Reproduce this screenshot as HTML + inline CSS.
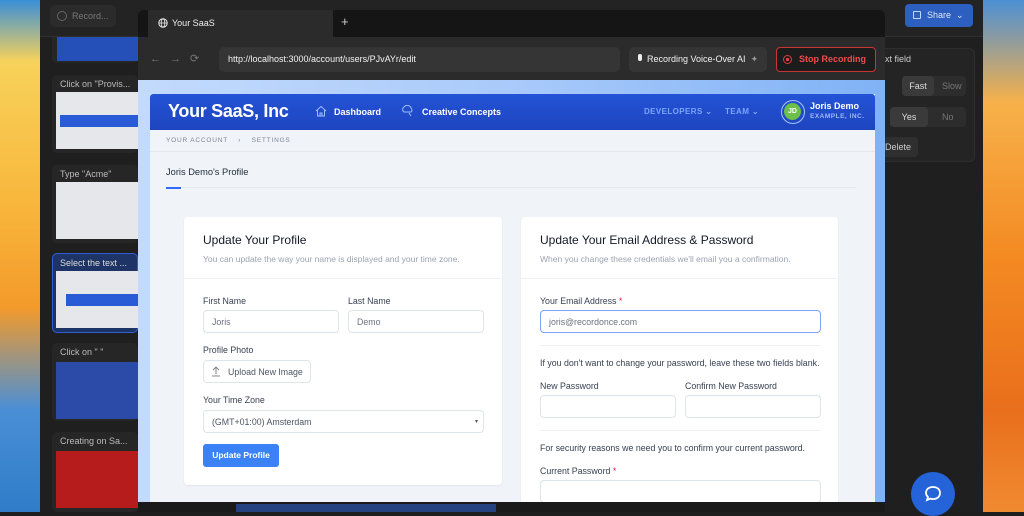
<!DOCTYPE html>
<html><head><style>
*{box-sizing:border-box;margin:0;padding:0}
body{width:1024px;height:512px;overflow:hidden;position:relative;font-family:"Liberation Sans",sans-serif;background:#1e1e1e}
.abs{position:absolute;white-space:nowrap}
.lbl{font-size:8.8px;color:#374151}
.inp{position:absolute;white-space:nowrap;background:#fff;border:1px solid #dfe3ea;border-radius:4px;font-size:8.8px;color:#6b7280;padding:0 8px;display:flex;align-items:center}
</style></head><body>
<div class="abs" style="left:0;top:0;width:40px;height:512px;background:linear-gradient(180deg,#3a8fd8 0%,#f7d25a 12%,#f8b63c 40%,#f39a2a 60%,#4a8fd6 80%,#2f7cc8 100%)"></div>
<div class="abs" style="left:983px;top:0;width:41px;height:512px;background:linear-gradient(180deg,#4b8fd4 0%,#f7b14a 20%,#f48a22 50%,#e96f1c 80%,#f08a30 100%)"></div>
<div class="abs" style="left:40px;top:0;width:943px;height:512px;background:#1f1f1f"></div>
<div class="abs" style="left:40px;top:0;width:943px;height:37px;background:#232323;border-bottom:1px solid #303030"></div>
<div class="abs" style="left:50px;top:5px;width:66px;height:22px;background:#2b2b2b;border-radius:5px;color:#777;font-size:9px;padding:6px 0 0 22px">Record...</div>
<div class="abs" style="left:57px;top:11px;width:10px;height:10px;border:1.5px solid #666;border-radius:50%"></div>
<div class="abs" style="left:905px;top:4px;width:68px;height:23px;background:#2d5fc0;border-radius:4px;color:#dbe6ff;font-size:9px;padding:6px 0 0 22px">Share &nbsp;⌄</div>
<div class="abs" style="left:913px;top:11px;width:8px;height:8px;border:1px solid #c5d6ff;border-radius:1px"></div>
<div class="abs" style="left:52px;top:37px;width:86px;height:26px;background:#262626;border-radius:0 0 5px 5px"></div>
<div class="abs" style="left:57px;top:37px;width:81px;height:24px;background:#2450b8"></div>
<div class="abs" style="left:52px;top:75px;width:86px;height:78px;background:#262626;border-radius:5px"></div>
<div class="abs" style="left:60px;top:79px;font-size:9px;color:#bbb">Click on "Provis...</div>
<div class="abs" style="left:56px;top:92px;width:82px;height:57px;background:#e5e7eb"></div>
<div class="abs" style="left:60px;top:115px;width:78px;height:12px;background:#2a5bd7"></div>
<div class="abs" style="left:52px;top:165px;width:86px;height:78px;background:#262626;border-radius:5px"></div>
<div class="abs" style="left:60px;top:169px;font-size:9px;color:#bbb">Type "Acme"</div>
<div class="abs" style="left:56px;top:182px;width:82px;height:57px;background:#e5e7eb"></div>
<div class="abs" style="left:52px;top:253px;width:86px;height:80px;background:#1f3466;border:1.5px solid #2f5fd0;border-radius:5px"></div>
<div class="abs" style="left:60px;top:258px;font-size:9px;color:#ddd">Select the text ...</div>
<div class="abs" style="left:56px;top:271px;width:82px;height:57px;background:#e5e7eb"></div>
<div class="abs" style="left:66px;top:294px;width:72px;height:12px;background:#2a5bd7"></div>
<div class="abs" style="left:52px;top:343px;width:86px;height:78px;background:#262626;border-radius:5px"></div>
<div class="abs" style="left:60px;top:347px;font-size:9px;color:#bbb">Click on " "</div>
<div class="abs" style="left:56px;top:362px;width:82px;height:57px;background:#2c4aa8"></div>
<div class="abs" style="left:52px;top:432px;width:86px;height:80px;background:#262626;border-radius:5px"></div>
<div class="abs" style="left:60px;top:436px;font-size:9px;color:#bbb">Creating on Sa...</div>
<div class="abs" style="left:56px;top:451px;width:82px;height:57px;background:#b71c1c"></div>
<div class="abs" style="left:875px;top:48px;width:100px;height:114px;background:#242424;border:1px solid #2e2e2e;border-radius:6px"></div>
<div class="abs" style="left:885px;top:54px;font-size:9px;color:#ccc">xt field</div>
<div class="abs" style="left:902px;top:76px;width:64px;height:20px;background:#2d2d2d;border-radius:4px"></div>
<div class="abs" style="left:902px;top:76px;width:32px;height:20px;background:#3a3a3a;border-radius:4px;font-size:9px;color:#ddd;text-align:center;line-height:20px">Fast</div>
<div class="abs" style="left:942px;top:76px;font-size:9px;color:#777;line-height:20px">Slow</div>
<div class="abs" style="left:890px;top:107px;width:76px;height:20px;background:#2d2d2d;border-radius:4px"></div>
<div class="abs" style="left:890px;top:107px;width:38px;height:20px;background:#3a3a3a;border-radius:4px;font-size:9px;color:#ddd;text-align:center;line-height:20px">Yes</div>
<div class="abs" style="left:942px;top:107px;font-size:9px;color:#777;line-height:20px">No</div>
<div class="abs" style="left:878px;top:137px;width:40px;height:20px;background:#2f2f2f;border-radius:4px;font-size:9px;color:#ccc;line-height:20px;padding-left:7px">Delete</div>
<div class="abs" style="left:911px;top:472px;width:44px;height:44px;background:#2563d9;border-radius:50%"></div>
<svg class="abs" style="left:922px;top:483px" width="22" height="22" viewBox="0 0 22 22"><path d="M11 4c4.4 0 7 2.6 7 6s-2.6 6-7 6c-1 0-1.8-.1-2.6-.4L5 17l1-3C4.7 12.8 4 11.5 4 10c0-3.4 2.6-6 7-6z" fill="none" stroke="#fff" stroke-width="1.8"/></svg>
<div class="abs" style="left:138px;top:10px;width:747px;height:492px;background:#2b2b2b;border-radius:6px 6px 0 0;overflow:hidden">
 <div class="abs" style="left:0;top:0;width:747px;height:27px;background:#151515"></div>
 <div class="abs" style="left:10px;top:0;width:185px;height:27px;background:#2b2b2b;font-size:9px;color:#eee;padding:8px 0 0 24px">Your SaaS</div>
 <svg class="abs" style="left:20px;top:8px" width="10" height="10" viewBox="0 0 10 10"><circle cx="5" cy="5" r="4.2" fill="none" stroke="#eee" stroke-width="1"/><ellipse cx="5" cy="5" rx="1.8" ry="4.2" fill="none" stroke="#eee" stroke-width=".8"/><path d="M1 5h8" stroke="#eee" stroke-width=".8"/></svg>
 <div class="abs" style="left:203px;top:4px;font-size:13px;color:#ccc">+</div>
 <div class="abs" style="left:12px;top:42px;font-size:11px;color:#777;letter-spacing:9px">←→⟳</div>
 <div class="abs" style="left:81px;top:37px;width:401px;height:25px;background:#353535;border-radius:5px;font-size:9px;color:#f2f2f2;padding:7px 0 0 9px">http://localhost:3000/account/users/PJvAYr/edit</div>
 <div class="abs" style="left:491px;top:37px;width:138px;height:25px;background:#353535;border-radius:5px;font-size:9px;color:#f2f2f2;padding:7px 0 0 18px">Recording Voice-Over AI &nbsp;<span style="color:#999">✦</span></div>
 <div class="abs" style="left:500px;top:44px;width:4px;height:7px;background:#eee;border-radius:2px"></div>
 <div class="abs" style="left:638px;top:37px;width:100px;height:25px;background:#1c1c1c;border:1.5px solid #c93434;border-radius:4px;font-size:9px;color:#f04a4a;font-weight:bold;padding:6px 0 0 22px">Stop Recording</div>
 <div class="abs" style="left:645px;top:45px;width:9px;height:9px;border:1.3px solid #e03c3c;border-radius:50%"><div style="margin:2px;width:3px;height:3px;background:#e03c3c"></div></div>
 <div class="abs" style="left:0;top:70px;width:747px;height:422px;background:linear-gradient(90deg,#c3dafc 0,#a9cafa 50%,#80b2f6 100%)"></div>
 <div class="abs" style="left:12px;top:84px;width:725px;height:408px;background:#f0f4f8"></div>
 <div class="abs" style="left:12px;top:84px;width:725px;height:36px;background:linear-gradient(180deg,#2353d6,#1e45c0);border-radius:3px 3px 0 0"></div>
 <div class="abs" style="left:30px;top:91px;font-size:18px;font-weight:bold;color:#fff;letter-spacing:-.3px">Your SaaS, Inc</div>
 <div class="abs" style="left:196px;top:97px;font-size:9px;color:#fff;font-weight:bold">Dashboard</div>
 <svg class="abs" style="left:177px;top:95px" width="12" height="12" viewBox="0 0 12 12"><path d="M1 6L6 1.5 11 6M2.5 5v6h7V5M5 11V8h2v3" fill="none" stroke="#9fc0ff" stroke-width="1"/></svg>
 <div class="abs" style="left:284px;top:97px;font-size:9px;color:#fff;font-weight:bold">Creative Concepts</div>
 <svg class="abs" style="left:263px;top:95px" width="14" height="12" viewBox="0 0 14 12"><path d="M3 7a3 3 0 010-5 4 4 0 017 1 2.5 2.5 0 010 4z" fill="none" stroke="#9fc0ff" stroke-width="1"/><path d="M8 8l2 3" stroke="#9fc0ff"/></svg>
 <div class="abs" style="left:506px;top:97px;font-size:8px;color:#7aa6ff;font-weight:bold;letter-spacing:.4px">DEVELOPERS ⌄</div>
 <div class="abs" style="left:587px;top:97px;font-size:8px;color:#7aa6ff;font-weight:bold;letter-spacing:.4px">TEAM ⌄</div>
 <div class="abs" style="left:643px;top:90px;width:24px;height:24px;border:1.5px solid #a8c2ff;border-radius:50%;padding:2px"><div style="width:17px;height:17px;background:#6cc04a;border-radius:50%;color:#fff;font-size:7px;font-weight:bold;text-align:center;line-height:17px">JD</div></div>
 <div class="abs" style="left:672px;top:91px;font-size:9px;color:#fff;font-weight:bold">Joris Demo</div>
 <div class="abs" style="left:672px;top:103px;font-size:6.5px;color:#9fbaf5;font-weight:bold;letter-spacing:.5px">EXAMPLE, INC.</div>
 <div class="abs" style="left:12px;top:120px;width:725px;height:22px;border-bottom:1px solid #e3e8ef"></div>
 <div class="abs" style="left:28px;top:127px;font-size:6.5px;color:#7b8494;letter-spacing:.8px">YOUR ACCOUNT &nbsp;&nbsp; › &nbsp;&nbsp; SETTINGS</div>
 <div class="abs" style="left:28px;top:157px;font-size:9.3px;color:#1f2937">Joris Demo's Profile</div>
 <div class="abs" style="left:28px;top:177px;width:690px;height:1px;background:#e3e8ef"></div>
 <div class="abs" style="left:28px;top:177px;width:15px;height:2px;background:#2f6cf6"></div>
 <div class="abs" style="left:46px;top:207px;width:318px;height:268px;background:#fff;border-radius:4px;box-shadow:0 1px 2px rgba(0,0,0,.06)">
  <div class="abs" style="left:19px;top:16px;font-size:12px;color:#111827">Update Your Profile</div>
  <div class="abs" style="left:19px;top:37px;font-size:8.5px;color:#9aa3b2">You can update the way your name is displayed and your time zone.</div>
  <div class="abs" style="left:0;top:61px;width:318px;height:1px;background:#eef0f3"></div>
  <div class="abs lbl" style="left:19px;top:79px">First Name</div>
  <div class="abs lbl" style="left:164px;top:79px">Last Name</div>
  <div class="inp" style="left:19px;top:93px;width:136px;height:23px">Joris</div>
  <div class="inp" style="left:164px;top:93px;width:136px;height:23px">Demo</div>
  <div class="abs lbl" style="left:19px;top:128px">Profile Photo</div>
  <div class="inp" style="left:19px;top:143px;width:108px;height:23px;padding-left:24px;color:#4b5563">Upload New Image</div>
  <svg class="abs" style="left:27px;top:148px" width="10" height="12" viewBox="0 0 10 12"><path d="M5 9V2M2 5l3-3 3 3M1 11h8" fill="none" stroke="#888" stroke-width="1"/></svg>
  <div class="abs lbl" style="left:19px;top:178px">Your Time Zone</div>
  <div class="inp" style="left:19px;top:193px;width:281px;height:23px;color:#4b5563">(GMT+01:00) Amsterdam<span style="position:absolute;right:5px;font-size:6px">▾</span></div>
  <div class="abs" style="left:19px;top:227px;width:76px;height:23px;background:#3b82f6;border-radius:3px;color:#fff;font-size:8.5px;font-weight:bold;text-align:center;line-height:23px">Update Profile</div>
 </div>
 <div class="abs" style="left:383px;top:207px;width:317px;height:290px;background:#fff;border-radius:4px;box-shadow:0 1px 2px rgba(0,0,0,.06)">
  <div class="abs" style="left:19px;top:16px;font-size:12px;color:#111827">Update Your Email Address &amp; Password</div>
  <div class="abs" style="left:19px;top:37px;font-size:8.5px;color:#9aa3b2">When you change these credentials we'll email you a confirmation.</div>
  <div class="abs" style="left:0;top:61px;width:317px;height:1px;background:#eef0f3"></div>
  <div class="abs lbl" style="left:19px;top:79px">Your Email Address <span style="color:#e11d48">*</span></div>
  <div class="inp" style="left:19px;top:93px;width:281px;height:23px;border:1.3px solid #7ca4f5">joris@recordonce.com</div>
  <div class="abs" style="left:19px;top:128px;width:281px;height:1px;background:#eef0f3"></div>
  <div class="abs lbl" style="left:19px;top:141px">If you don't want to change your password, leave these two fields blank.</div>
  <div class="abs lbl" style="left:19px;top:164px">New Password</div>
  <div class="abs lbl" style="left:164px;top:164px">Confirm New Password</div>
  <div class="inp" style="left:19px;top:178px;width:136px;height:23px"></div>
  <div class="inp" style="left:164px;top:178px;width:136px;height:23px"></div>
  <div class="abs" style="left:19px;top:213px;width:281px;height:1px;background:#eef0f3"></div>
  <div class="abs lbl" style="left:19px;top:226px">For security reasons we need you to confirm your current password.</div>
  <div class="abs lbl" style="left:19px;top:249px">Current Password <span style="color:#e11d48">*</span></div>
  <div class="inp" style="left:19px;top:263px;width:281px;height:23px"></div>
 </div>
</div>
<div class="abs" style="left:138px;top:502px;width:747px;height:10px;background:#1a1a1a"></div>
<div class="abs" style="left:236px;top:504px;width:260px;height:8px;background:#23427f"></div>
</body></html>
